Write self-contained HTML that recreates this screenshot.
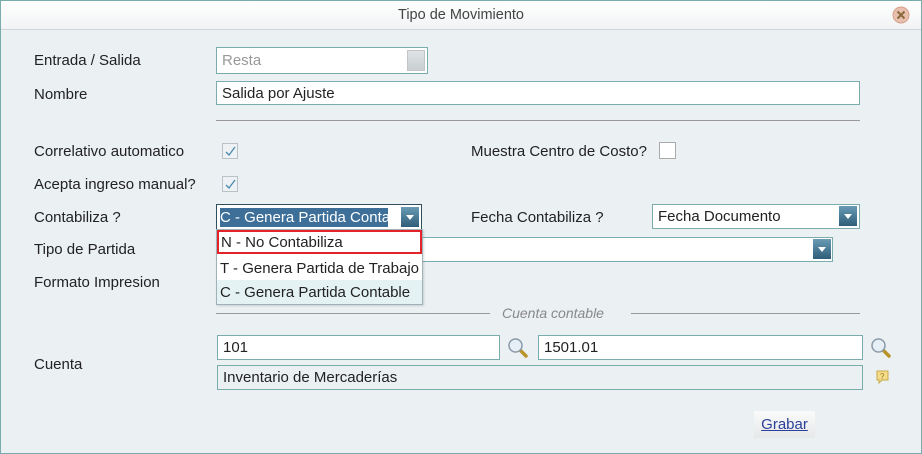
<!DOCTYPE html><html><head><meta charset="utf-8"><style>
*{box-sizing:border-box;margin:0;padding:0}
body{width:922px;height:454px;overflow:hidden;font-family:"Liberation Sans",sans-serif;font-size:15px;color:#222;background:#fff}
.win{position:absolute;left:0;top:0;width:922px;height:454px;border:1px solid #7aacad;background:#ebf0f3}
.title{position:absolute;left:0;top:0;width:920px;height:29px;background:linear-gradient(#fff,#f1f3f4);border-bottom:1px solid #cfd6d9;text-align:center;line-height:29px;color:#444;font-size:14.5px}
.a{position:absolute}
.lbl{position:absolute;left:33px;line-height:18px;margin-top:2px}
.inp{position:absolute;border:1px solid #7aacad;background:#fff;line-height:24px;padding-left:5px;white-space:nowrap;overflow:hidden}
.btn{position:absolute;top:2px;width:18px;height:20px;background:linear-gradient(#6a9bb3,#2d5d78)}
.btn:after{content:"";position:absolute;left:5px;top:8px;border-left:4px solid transparent;border-right:4px solid transparent;border-top:5px solid #fff}
.cb{position:absolute;width:16px;height:16px;border:1px solid #b9c3c7;background:#eef2f4}
.cb svg{position:absolute;left:1px;top:1px}
</style></head><body><div class="win">
<div class="title">Tipo de Movimiento</div>
<svg class="a" style="left:891px;top:5px" width="18" height="18"><circle cx="9" cy="9" r="8" fill="#e8c0b0" stroke="#d8a08a"/><path d="M5.5 5.5L12.5 12.5M12.5 5.5L5.5 12.5" stroke="#8a6a3a" stroke-width="2"/></svg>

<div class="lbl" style="top:49px">Entrada / Salida</div>
<div class="inp" style="left:215px;top:46px;width:212px;height:27px;color:#999;line-height:26px">Resta<div class="a" style="right:2px;top:2px;width:18px;height:21px;background:linear-gradient(#dfe3e5,#c9cfd2);border:1px solid #c0c6c9"></div></div>
<div class="lbl" style="top:83px">Nombre</div>
<div class="inp" style="left:215px;top:80px;width:644px;height:24px">Salida por Ajuste</div>
<div class="a" style="left:215px;top:119px;width:644px;height:1px;background:#999"></div>

<div class="lbl" style="top:140px">Correlativo automatico</div>
<div class="cb" style="left:221px;top:142px"><svg width="13" height="13"><path d="M2 7L5 10L11 2" stroke="#4a8ab0" fill="none" stroke-width="1.3"/></svg></div>
<div class="lbl" style="top:173px">Acepta ingreso manual?</div>
<div class="cb" style="left:221px;top:175px"><svg width="13" height="13"><path d="M2 7L5 10L11 2" stroke="#4a8ab0" fill="none" stroke-width="1.3"/></svg></div>
<div class="lbl" style="left:470px;top:140px">Muestra Centro de Costo?</div>
<div class="cb" style="left:658px;top:141px;background:#fff;width:17px;height:17px;border-color:#aaa"></div>

<div class="lbl" style="top:206px">Contabiliza ?</div>
<div class="inp" style="left:215px;top:203px;width:206px;height:26px;border-color:#2f4f5f;padding-left:3px"><span style="background:#3d6f99;color:#fff;display:inline-block;width:168px;line-height:19px;margin-top:3px;overflow:hidden;white-space:nowrap;vertical-align:top">C - Genera Partida Contable</span><div class="btn" style="right:2px"></div></div>
<div class="lbl" style="left:470px;top:206px">Fecha Contabiliza ?</div>
<div class="inp" style="left:651px;top:203px;width:208px;height:25px">Fecha Documento<div class="btn" style="right:2px;top:1px"></div></div>

<div class="lbl" style="top:238px">Tipo de Partida</div>
<div class="inp" style="left:215px;top:236px;width:617px;height:25px"><div class="btn" style="right:1px;top:1px"></div></div>
<div class="lbl" style="top:271px">Formato Impresion</div>

<div class="a" style="left:215px;top:228px;width:207px;height:76px;background:#fff;border:1px solid #9fb2b8;box-shadow:1px 1px 2px rgba(0,0,0,.15)">
<div class="a" style="left:0;top:0;width:205px;height:24px;border:2px solid #e3222a;padding-left:2px;line-height:21px">N - No Contabiliza</div>
<div class="a" style="left:3px;top:28px;line-height:22px;white-space:nowrap">T - Genera Partida de Trabajo</div>
<div class="a" style="left:0;top:50px;width:205px;height:24px;background:#e4f2f3;padding-left:3px;line-height:25px;white-space:nowrap">C - Genera Partida Contable</div>
</div>

<div class="a" style="left:215px;top:312px;width:274px;height:1px;background:#999"></div>
<div class="a" style="left:630px;top:312px;width:229px;height:1px;background:#999"></div>
<div class="a" style="left:501px;top:304px;color:#888;font-style:italic;font-size:14px">Cuenta contable</div>

<div class="lbl" style="top:353px">Cuenta</div>
<div class="inp" style="left:216px;top:334px;width:283px;height:25px">101</div>
<div class="inp" style="left:537px;top:334px;width:325px;height:25px">1501.01</div>
<svg class="a" style="left:506px;top:336px" width="22" height="22"><path d="M13 13L19 19" stroke="#b8942a" stroke-width="3.5" stroke-linecap="round"/><circle cx="8.5" cy="8.5" r="6.5" fill="#e6eef6" stroke="#8a9aa8" stroke-width="1.5"/></svg>
<svg class="a" style="left:869px;top:336px" width="22" height="22"><path d="M13 13L19 19" stroke="#b8942a" stroke-width="3.5" stroke-linecap="round"/><circle cx="8.5" cy="8.5" r="6.5" fill="#e6eef6" stroke="#8a9aa8" stroke-width="1.5"/></svg>
<div class="inp" style="left:216px;top:364px;width:646px;height:25px;background:#ebf0f3">Inventario de Mercaderías</div>
<svg class="a" style="left:874px;top:368px" width="16" height="16"><path d="M2 2H13V11H7L4 14V11H2Z" fill="#f3dc8a" stroke="#c9a94a"/><text x="5" y="10" font-size="8" fill="#a07a20" font-family="Liberation Sans">?</text></svg>

<div class="a" style="left:753px;top:410px;width:61px;height:27px;background:linear-gradient(#fafafa,#e6e8e9);text-align:center;line-height:27px;color:#2a3f9a;text-decoration:underline">Grabar</div>
</div></body></html>
